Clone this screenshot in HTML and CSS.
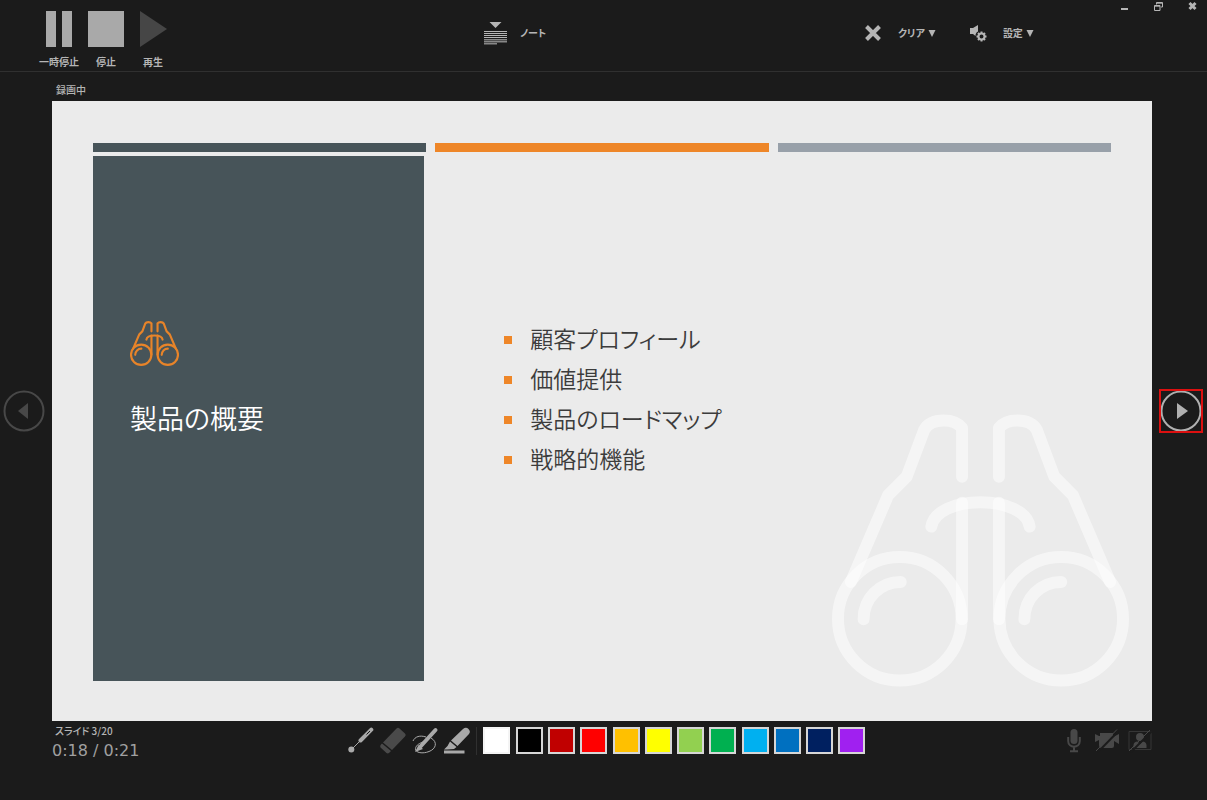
FILE: index.html
```html
<!DOCTYPE html>
<html lang="ja">
<head>
<meta charset="utf-8">
<meta name="viewport" content="width=device-width, initial-scale=1">
<title>スライド ショーの記録</title>
<link rel="stylesheet" href="styles.css">
</head>
<body>
<svg class="defs" aria-hidden="true">
  <symbol id="binoculars" viewBox="0 0 298 274">
    <circle cx="68" cy="205.500" r="62"/>
    <circle cx="230" cy="205.500" r="62"/>
    <path d="M19 168.500 56.300 81.500 75 62.700 92.500 16C96 9.500 103 6.500 112 6.500S127 9.500 130.500 14V63"/>
    <path d="M279 168.500 241.700 81.500 223 62.700 205.500 16C202 9.500 195 6.500 186 6.500S171 9.500 167.500 14V63"/>
    <path d="M130.500 89V206"/>
    <path d="M167.500 89V206"/>
    <path d="M99.700 113C102 98 123 88.500 149 88.500S196 98 198.300 113"/>
    <path d="M31.700 206C31.700 185 48 168.500 69 168.500"/>
    <path d="M193 206C193 185 209 168.500 230 168.500"/>
  </symbol>
</svg>
<div class="app">
  <header class="toolbar">
    <div class="transport">
      <button class="transport-button" type="button">
        <svg width="38" height="38" viewBox="0 0 38 38" aria-hidden="true"><path d="M6 1h10v36H6zM22 1h10v36H22z"/></svg>
        <span>一時停止</span>
      </button>
      <button class="transport-button" type="button">
        <svg width="38" height="38" viewBox="0 0 38 38" aria-hidden="true"><path d="M1 1h36v36H1z"/></svg>
        <span>停止</span>
      </button>
      <button class="transport-button play" type="button">
        <svg width="38" height="38" viewBox="0 0 38 38" aria-hidden="true"><path d="M6 1 33 19 6 37z"/></svg>
        <span>再生</span>
      </button>
    </div>
    <div class="tools">
      <button class="tool notes" type="button">
        <svg width="24" height="24" viewBox="0 0 24 24" aria-hidden="true"><path d="M5.500 1h12L11.500 7zM0 10h23v1H0zM0 12h23v1H0zM0 14h23v1H0zM0 16h23v1H0z"/><path opacity=".7" d="M0 18h23v1H0zM0 19.500h23v2H0zM0 22h13v1.500H0z"/></svg>
        <span>ノート</span>
      </button>
    </div>
    <div class="tools end">
      <button class="tool clear" type="button">
        <svg width="16" height="16" viewBox="0 0 16 16" aria-hidden="true"><path class="thick" d="M1.500 1.500 14.500 14.500M14.500 1.500 1.500 14.500"/></svg>
        <span>クリア</span><svg class="caret" width="8" height="8" viewBox="0 0 8 8" aria-hidden="true"><path d="M.5 1h7L4 8z"/></svg>
      </button>
      <button class="tool settings" type="button">
        <svg width="18" height="18" viewBox="0 0 18 18" aria-hidden="true"><path d="M1 4h3L9 1v6.500C7 8.500 6.500 10 6.500 12L4 10H1z"/><circle class="ring" cx="12.500" cy="12.500" r="3"/><path class="teeth" d="M12.500 7.500V9M12.500 16V17.500M7.500 12.500H9M16 12.500H17.500M9 9 10 10M15 15 16 16M16 9 15 10M10 15 9 16"/></svg>
        <span>設定</span><svg class="caret" width="8" height="8" viewBox="0 0 8 8" aria-hidden="true"><path d="M.5 1h7L4 8z"/></svg>
      </button>
      <div class="window-controls">
        <button type="button" aria-label="最小化"><svg width="10" height="10" viewBox="0 0 10 10"><path d="M2 7h7v2H2z"/></svg></button>
        <button type="button" aria-label="元に戻す"><svg width="10" height="10" viewBox="0 0 10 10"><path class="thin" d="M3.500 3.500V1.500H9.500V6H8M1.500 4.500H7V9.500H1.500zM3.500 2.200H9.500M1.500 5.200H7"/></svg></button>
        <button type="button" aria-label="閉じる"><svg width="10" height="10" viewBox="0 0 10 10"><path class="cross" d="M2.500 2 8.500 8M8.500 2 2.500 8"/></svg></button>
      </div>
    </div>
  </header>

  <p class="status">録画中</p>

  <main class="stage">
    <button class="nav previous" type="button" aria-label="前のスライド"><svg width="42" height="42" viewBox="0 0 42 42"><circle cx="21" cy="21" r="19.500"/><path d="M25 13V29L15 21z"/></svg></button>
    <section class="slide">
      <div class="bars"><i class="bar slate"></i><i class="bar orange"></i><i class="bar gray"></i></div>
      <div class="slide-body">
        <div class="panel">
          <svg class="panel-icon" aria-hidden="true"><use href="#binoculars"/></svg>
          <h1>製品の概要</h1>
        </div>
        <ul class="points">
          <li>顧客プロフィール</li>
          <li>価値提供</li>
          <li>製品のロードマップ</li>
          <li>戦略的機能</li>
        </ul>
      </div>
      <svg class="watermark" viewBox="0 0 298 274" aria-hidden="true"><use href="#binoculars"/></svg>
    </section>
    <button class="nav next" type="button" aria-label="次のスライド"><svg width="42" height="42" viewBox="0 0 42 42"><circle cx="21" cy="21" r="19.500"/><path d="M17 13V29L28 21z"/></svg></button>
  </main>

  <footer class="footer">
    <div class="progress">
      <p class="slide-count">スライド 3/20</p>
      <p class="time">0:18 / 0:21</p>
    </div>
    <div class="drawing">
      <div class="pens">
        <button type="button" aria-label="レーザー ポインター"><svg width="28" height="28" viewBox="0 0 28 28"><circle cx="4.300" cy="22.500" r="3"/><path class="line fine" d="M5 22 14 13"/><path class="barrel" d="M13.500 13.500 24.300 2.700"/><path class="slot" d="M19.500 7.500 23 4"/></svg></button>
        <button class="off" type="button" aria-label="消しゴム"><svg width="28" height="28" viewBox="0 0 28 28"><path d="M4 15.500 17.500 1.500Q19 0 20.500 1.500L26 6.500Q27.500 8 26 9.500L13 23zM3 16.500 12 24 10.500 25.500Q9 27 7.500 26L1.500 20.500Q.5 19 2 17.500z"/></svg></button>
        <button type="button" aria-label="ペン"><svg width="28" height="28" viewBox="0 0 28 28"><path class="line fine" d="M2 14C4 9.500 9 8 15 10M20 11C27 15 25 22 18 24.500C12 27 4 26 4.500 21.500C5 18 9 16 12 15"/><path class="barrel" d="M9.500 19.500 24.500 3"/><path d="M7.500 18 12 22 4 25z"/></svg></button>
        <button type="button" aria-label="蛍光ペン"><svg width="28" height="28" viewBox="0 0 28 28"><path d="M8 13.500 20 2Q23-.5 25.500 2T26 7L14.500 19zM7 14.500 13.500 20 11 22 4 22.500H1L4.500 19zM1 23.500H21.500V26.500H1z"/></svg></button>
      </div>
      <div class="swatches">
        <button class="swatch white" type="button" aria-label="白"></button>
        <button class="swatch black" type="button" aria-label="黒"></button>
        <button class="swatch dark-red" type="button" aria-label="濃い赤"></button>
        <button class="swatch red" type="button" aria-label="赤"></button>
        <button class="swatch amber" type="button" aria-label="オレンジ"></button>
        <button class="swatch yellow" type="button" aria-label="黄"></button>
        <button class="swatch lime" type="button" aria-label="薄い緑"></button>
        <button class="swatch green" type="button" aria-label="緑"></button>
        <button class="swatch sky" type="button" aria-label="薄い青"></button>
        <button class="swatch blue" type="button" aria-label="青"></button>
        <button class="swatch navy" type="button" aria-label="濃い青"></button>
        <button class="swatch purple" type="button" aria-label="紫"></button>
      </div>
    </div>
    <div class="devices">
      <button type="button" aria-label="マイク"><svg width="24" height="24" viewBox="0 0 24 24"><rect x="8.500" y="0" width="7" height="15" rx="3.500"/><path class="line" d="M6.200 8V12C6.200 19.500 17.800 19.500 17.800 12V8M12 18V22M8 22.300H16"/></svg></button>
      <button type="button" aria-label="カメラ"><svg width="24" height="24" viewBox="0 0 24 24"><path d="M0 5 4 7H5V4H18V8L24 5V15L19 12V17Q19 19 17 19H6Q4 19 4 16V11L0 13z"/><path class="cut" d="M2.500 23.500 23.500 2"/><path class="line thin-line" d="M1 22 22 .5"/></svg></button>
      <button type="button" aria-label="カメラのプレビュー"><svg width="24" height="24" viewBox="0 0 24 24"><path class="frame" d="M1 2.500H23V20.500H1z"/><circle cx="12" cy="8" r="4"/><path d="M5.500 19V16Q6 12.500 9.500 12.500L12 15 14.500 12.500Q18 12.500 18.500 16V19z"/><path class="cut" d="M2.500 23.500 23.500 2.500"/><path class="line thin-line" d="M1 22 22 1"/></svg></button>
    </div>
  </footer>
</div>
</body>
</html>
```

FILE: styles.css
```css
* { box-sizing: border-box; }

body {
  margin: 0;
  background: #1b1b1b;
  color: #b5b5b5;
  font-family: "Noto Sans CJK JP", sans-serif;
  font-feature-settings: "palt";
  font-size: 10px;
}

p, h1, ul { margin: 0; padding: 0; }

button {
  margin: 0;
  padding: 0;
  border: 0;
  background: none;
  color: inherit;
  font: inherit;
  font-feature-settings: inherit;
  cursor: pointer;
}

svg { display: block; flex: none; fill: currentColor; }

.defs { position: absolute; width: 0; height: 0; }

.app {
  display: grid;
  grid-template-rows: auto auto minmax(0, 1fr) auto;
  min-height: 100vh;
}

/* Top toolbar */
.toolbar {
  display: grid;
  grid-template-columns: 484fr 381fr 342fr;
  height: 72px;
  border-bottom: 1px solid #303030;
  font-weight: 700;
  line-height: 14px;
}

.transport { display: flex; gap: 7px; padding: 10px 0 0 39px; align-items: flex-start; }

.transport-button {
  display: flex;
  flex-direction: column;
  align-items: center;
  gap: 7px;
  width: 40px;
  white-space: nowrap;
}

.transport-button svg { color: #a9a9a9; }
.transport-button.play svg { color: #464646; }

.tools { display: flex; align-items: flex-start; }

.tool {
  display: flex;
  align-items: center;
  height: 24px;
  margin-top: 21px;
  white-space: nowrap;
}

.notes { gap: 12px; }
.clear > span { margin-left: 17px; }
.settings { margin-left: 33px; }
.settings > span { margin-left: 16px; }
.caret { margin-left: 3px; }

.thick { stroke: currentColor; stroke-width: 4; }
.ring { fill: none; stroke: currentColor; stroke-width: 2; }
.teeth { stroke: currentColor; stroke-width: 2; }
.thin { fill: none; stroke: currentColor; stroke-width: 1; }
.cross { stroke: currentColor; stroke-width: 3; }

.window-controls { display: flex; gap: 24px; margin-left: auto; padding: 1px 10px 0 0; }

/* Slide area */
.status { padding: 11px 0 4px 56px; font-weight: 500; line-height: 14px; }

.stage {
  display: grid;
  grid-template-columns: 52px minmax(0, 1fr) 55px;
  align-items: center;
}

.nav { justify-self: center; }
.nav circle { fill: none; stroke: currentColor; stroke-width: 2; }
.previous { color: #484848; margin-right: 4px; }
.next { color: #b0b0b0; outline: 2px solid #dc1010; outline-offset: -1px; margin-left: 2px; }

.slide {
  position: relative;
  display: flex;
  flex-direction: column;
  align-self: stretch;
  gap: 4px;
  padding: 42px 41px 40px;
  background: #ebebeb;
}

.bars, .slide-body {
  display: grid;
  grid-template-columns: repeat(3, minmax(0, 1fr));
  column-gap: 9px;
}

.bar { height: 9px; }
.slate { background: #475459; }
.orange { background: #ee8628; }
.gray { background: #98a0a9; }

.slide-body { flex: 1; }

.panel {
  display: flex;
  flex-direction: column;
  justify-content: center;
  gap: 32px;
  margin-right: 2px;
  padding: 0 37px 78px;
  background: #475459;
  color: #fff;
}

.panel-icon {
  width: 49px;
  height: 45px;
  fill: none;
  stroke: #e88429;
  stroke-width: 13px;
  stroke-linecap: round;
}

.panel h1 { font-size: 27px; font-weight: 350; line-height: 40px; }

.points {
  display: flex;
  grid-column: span 2;
  flex-direction: column;
  justify-content: center;
  padding: 0 0 42px 69px;
  list-style: none;
  color: #3c3c3c;
  font-size: 23px;
  font-weight: 350;
  line-height: 40px;
}

.points li { display: flex; align-items: center; gap: 18px; }
.points li::before { content: ""; width: 8px; height: 8px; margin-top: 4px; background: #ee8628; }

.watermark {
  position: absolute;
  right: 23px;
  bottom: 34px;
  width: 27%;
  fill: none;
  stroke: #fff;
  stroke-opacity: 0.5;
  stroke-width: 12px;
  stroke-linecap: round;
  stroke-linejoin: round;
}

/* Bottom bar */
.footer {
  display: grid;
  grid-template-columns: 296fr auto 287fr;
  align-items: start;
  min-height: 79px;
  padding: 2px 55px 0 52px;
}

.slide-count { padding-left: 3px; font-weight: 500; line-height: 16px; }
.time { font-family: "DejaVu Sans", sans-serif; font-size: 16px; line-height: 24px; color: #a0a0a0; }

.drawing { display: flex; padding-top: 4px; }

.pens {
  display: flex;
  gap: 4px;
  margin-right: 6px;
  padding-right: 5px;
  border-right: 1px solid #303030;
  color: #a9a9a9;
}

.pens .off { color: #4a4a4a; }

.line { fill: none; stroke: currentColor; stroke-width: 2; }
.fine { stroke-width: 1; }
.barrel { stroke: currentColor; stroke-width: 4; stroke-linecap: round; }
.slot { stroke: #1b1b1b; stroke-width: 1; }
.cut { stroke: #1b1b1b; stroke-width: 2; }
.thin-line { stroke-width: 1; }
.frame { fill: none; stroke: #363636; stroke-width: 1; }

.swatches { display: flex; justify-content: space-between; width: 382px; }
.swatch { width: 27px; height: 27px; border: 2px solid #d6d6d6; }

.white { background: #fff; border-color: #f4f4f4; }
.black { background: #000; }
.dark-red { background: #c00000; }
.red { background: #f00; }
.amber { background: #ffc000; }
.yellow { background: #ff0; }
.lime { background: #92d050; }
.green { background: #00b050; }
.sky { background: #00b0f0; }
.blue { background: #0070c0; }
.navy { background: #002060; }
.purple { background: #a020f0; }

.devices { display: flex; justify-content: flex-end; gap: 9px; padding-top: 6px; color: #484848; }
```
